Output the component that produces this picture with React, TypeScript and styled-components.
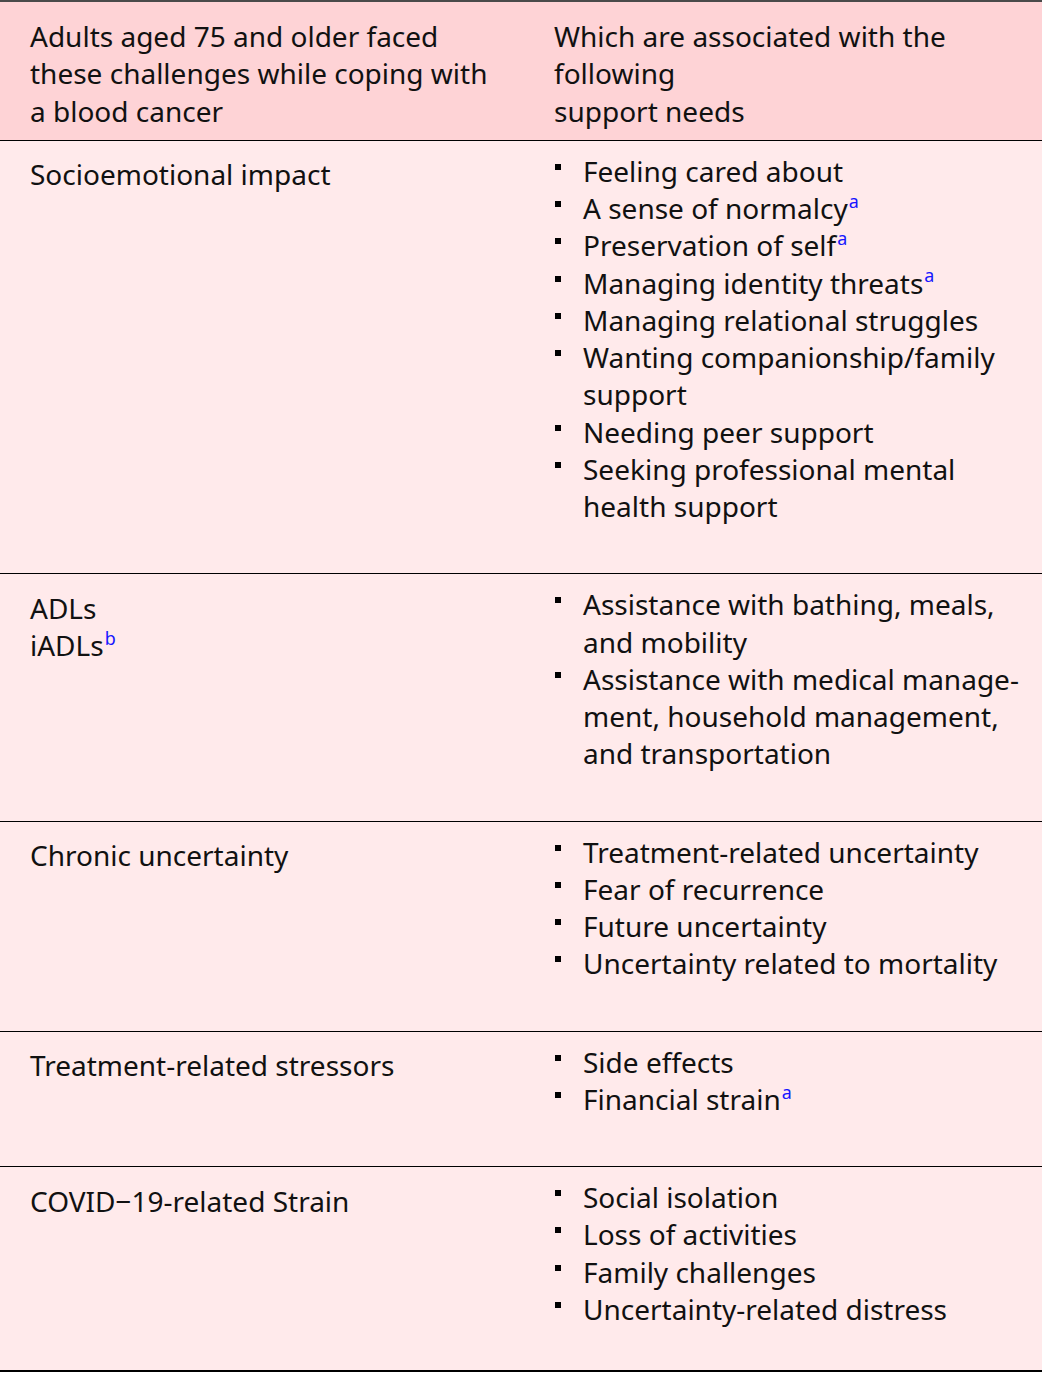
import React from "react";
import styled, { createGlobalStyle } from "styled-components";

const Global = createGlobalStyle`
  html, body { margin: 0; padding: 0; background: #ffffff; }
  body { font-family: "Noto Sans", "Open Sans", sans-serif; color: #111; }
`;

const Table = styled.table`
  width: 1042px;
  border-collapse: collapse;
  table-layout: fixed;
  font-size: 28px;
  line-height: 37.25px;
  border-top: 2px solid #4a4a4a;
  border-bottom: 2px solid #000;
`;

const HeadRow = styled.tr`
  background: #fed3d6;
  border-bottom: 1px solid #000;
`;

const HeadCell = styled.th<{ $w: number }>`
  width: ${(p) => p.$w}px;
  box-sizing: border-box;
  text-align: left;
  font-weight: 400;
  vertical-align: top;
  white-space: nowrap;
  padding: 16px 4px 10px 30px;
`;

const BodyRow = styled.tr`
  background: #ffeaeb;
  border-bottom: 1px solid #000;
  &:last-child { border-bottom: none; }
`;

const Cell = styled.td`
  vertical-align: top;
  white-space: nowrap;
  padding: 15.5px 4px 15px 30px;
`;

const List = styled.ul<{ $last?: boolean }>`
  list-style: none;
  margin: -3.5px 0 ${(p) => (p.$last ? 26.5 : 33)}px 0;
  padding: 0 0 0 29px;
`;

const Item = styled.li`
  position: relative;
  &::before {
    content: "";
    position: absolute;
    left: -28px;
    top: 11px;
    width: 6px;
    height: 6px;
    background: #000;
  }
`;

const Note = styled.sup`
  color: #1616ff;
  font-size: 0.64em;
  line-height: 0;
  margin-left: 1px;
  vertical-align: 0.62em;
`;

type Row = { left: React.ReactNode; items: React.ReactNode[] };

const rows: Row[] = [
  {
    left: "Socioemotional impact",
    items: [
      "Feeling cared about",
      <>A sense of normalcy<Note>a</Note></>,
      <>Preservation of self<Note>a</Note></>,
      <>Managing identity threats<Note>a</Note></>,
      "Managing relational struggles",
      <>Wanting companionship/family<br />support</>,
      "Needing peer support",
      <>Seeking professional mental<br />health support</>,
    ],
  },
  {
    left: <>ADLs<br />iADLs<Note>b</Note></>,
    items: [
      <>Assistance with bathing, meals,<br />and mobility</>,
      <>Assistance with medical manage-<br />ment, household management,<br />and transportation</>,
    ],
  },
  {
    left: "Chronic uncertainty",
    items: [
      "Treatment-related uncertainty",
      "Fear of recurrence",
      "Future uncertainty",
      "Uncertainty related to mortality",
    ],
  },
  {
    left: "Treatment-related stressors",
    items: ["Side effects", <>Financial strain<Note>a</Note></>],
  },
  {
    left: "COVID\u221219-related Strain",
    items: [
      "Social isolation",
      "Loss of activities",
      "Family challenges",
      "Uncertainty-related distress",
    ],
  },
];

export default function App() {
  return (
    <>
      <Global />
      <Table>
        <thead>
          <HeadRow>
            <HeadCell $w={524}>
              Adults aged 75 and older faced
              <br />
              these challenges while coping with
              <br />a blood cancer
            </HeadCell>
            <HeadCell $w={518}>
              Which are associated with the
              <br />
              following
              <br />
              support needs
            </HeadCell>
          </HeadRow>
        </thead>
        <tbody>
          {rows.map((r, i) => (
            <BodyRow key={i}>
              <Cell>{r.left}</Cell>
              <Cell>
                <List $last={i === rows.length - 1}>
                  {r.items.map((it, j) => (
                    <Item key={j}>{it}</Item>
                  ))}
                </List>
              </Cell>
            </BodyRow>
          ))}
        </tbody>
      </Table>
    </>
  );
}
